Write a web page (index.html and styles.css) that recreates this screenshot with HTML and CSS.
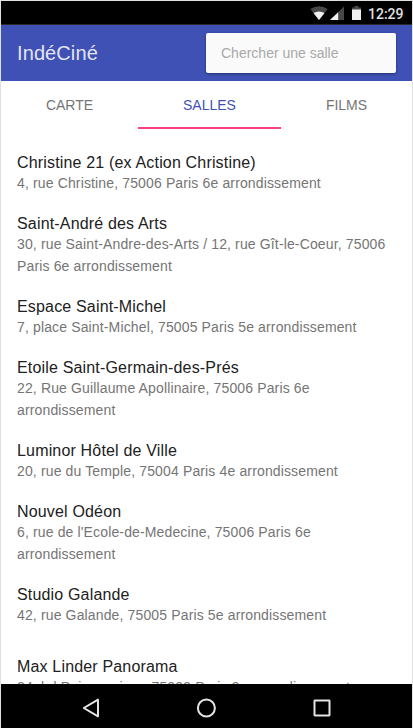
FILE: index.html
```
<!DOCTYPE html>
<html lang="fr">
<head>
<meta charset="utf-8">
<title>IndéCiné</title>
<link rel="stylesheet" href="styles.css">
</head>
<body>
<div class="phone">
  <div class="status">
    <svg class="status-icons" width="56" height="16" viewBox="0 0 56 16">
      <path d="M.300 4Q9 -1.500 17.700 4L9 15Z" fill="#484848"/>
      <path d="M3.500 8Q9 4.800 14.500 8L9 15Z" fill="#f1f1f1"/>
      <path d="M34 1.500V15H20Z" fill="#484848"/>
      <path d="M28.200 7.200V15H20Z" fill="#f1f1f1"/>
      <path d="M42 2.500h2.500V1h4V2.500H51v3h-9z" fill="#484848"/>
      <path d="M42 4.500h9V15h-9z" fill="#f1f1f1"/>
    </svg>
    <span class="clock">12:29</span>
  </div>
  <header class="toolbar">
    <h1 class="title">IndéCiné</h1>
    <input class="search" type="text" placeholder="Chercher une salle">
  </header>
  <nav class="tabs">
    <a class="tab">CARTE</a>
    <a class="tab active">SALLES</a>
    <a class="tab">FILMS</a>
  </nav>
  <main class="list">
    <section class="item"><h3>Christine 21 (ex Action Christine)</h3><p>4, rue Christine, 75006 Paris 6e arrondissement</p></section>
    <section class="item"><h3>Saint-André des Arts</h3><p>30, rue Saint-Andre-des-Arts / 12, rue Gît-le-Coeur, 75006 Paris 6e arrondissement</p></section>
    <section class="item"><h3>Espace Saint-Michel</h3><p>7, place Saint-Michel, 75005 Paris 5e arrondissement</p></section>
    <section class="item"><h3>Etoile Saint-Germain-des-Prés</h3><p>22, Rue Guillaume Apollinaire, 75006 Paris 6e arrondissement</p></section>
    <section class="item"><h3>Luminor Hôtel de Ville</h3><p>20, rue du Temple, 75004 Paris 4e arrondissement</p></section>
    <section class="item"><h3>Nouvel Odéon</h3><p>6, rue de l'Ecole-de-Medecine, 75006 Paris 6e arrondissement</p></section>
    <section class="item last-in-area"><h3>Studio Galande</h3><p>42, rue Galande, 75005 Paris 5e arrondissement</p></section>
    <section class="item"><h3>Max Linder Panorama</h3><p>24, bd Poissonniere, 75009 Paris 9e arrondissement</p></section>
  </main>
  <footer class="navbar">
    <svg width="18" height="20" viewBox="0 0 18 20"><path d="M16 1.700V18.300L1.800 10Z"/></svg>
    <svg width="20" height="20" viewBox="0 0 20 20"><circle cx="10.400" cy="10" r="8.500"/></svg>
    <svg width="18" height="18" viewBox="0 0 18 18"><rect x="1.500" y="1.500" width="15" height="15" rx=".4"/></svg>
  </footer>
</div>
</body>
</html>
```
FILE: styles.css
```
* { box-sizing: border-box; }
body {
  margin: 0;
  font-family: "Liberation Sans", Arial, sans-serif;
  background: #fff;
}
h1, h3, p { margin: 0; font-weight: 400; }
.phone {
  display: flex;
  flex-direction: column;
  height: 728px;
  border: 1px solid #e0e0e0;
  border-bottom: 0;
  overflow: hidden;
}
.status {
  display: flex;
  flex: none;
  justify-content: flex-end;
  height: 24px;
  padding: 4px 8px 0 0;
  background: #000;
  border-bottom: 1px solid #2b2b2b;
}
.status-icons { margin-right: 2px; }
.clock {
  width: 36px;
  font: 500 14px/18px Roboto, sans-serif;
  color: #e0e0e0;
  white-space: nowrap;
}
.toolbar {
  display: flex;
  flex: none;
  align-items: center;
  justify-content: space-between;
  height: 56px;
  padding: 0 16px;
  background: #3f51b5;
}
.title {
  font-size: 20px;
  letter-spacing: .1px;
  color: rgba(255, 255, 255, .87);
}
.search {
  width: 190px;
  height: 40px;
  padding: 0 15px;
  border: 0;
  border-radius: 2px;
  background: #fafafa;
  box-shadow: 0 1px 3px rgba(0, 0, 0, .4);
  font: 14px "Liberation Sans", Arial, sans-serif;
}
.search::placeholder { color: #a9a9a9; }
.tabs {
  display: grid;
  flex: none;
  grid-template-columns: 137px 143px 131px;
  height: 48px;
}
.tab {
  height: 48px;
  font-size: 14px;
  line-height: 48px;
  text-align: center;
  color: #757575;
}
.active {
  color: #3f51b5;
  border-bottom: 2px solid #ff4081;
}
.list {
  flex: 1;
  min-height: 0;
  padding: 24px 16px 0;
  overflow: hidden;
}
.item { margin-bottom: 20px; }
.last-in-area { margin-bottom: 31px; }
.item h3 {
  font-size: 16px;
  line-height: 19px;
  letter-spacing: .17px;
  color: #212121;
}
.item p {
  font-size: 14px;
  line-height: 22px;
  letter-spacing: .14px;
  color: #757575;
}
.navbar {
  display: flex;
  flex: none;
  align-items: center;
  justify-content: center;
  gap: 96.5px;
  height: 44px;
  padding: 3px 1px 0 0;
  background: #000;
}
.navbar svg {
  fill: none;
  stroke: #e4e4e4;
  stroke-width: 2;
  stroke-linejoin: round;
}
```
